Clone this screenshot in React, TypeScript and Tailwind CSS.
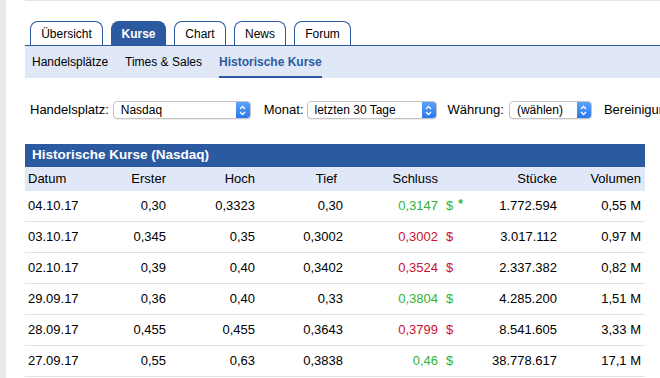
const TABS = [
  { label: "Übersicht", w: "w-[73px]", active: false },
  { label: "Kurse", w: "w-[55px]", active: true },
  { label: "Chart", w: "w-[52px]", active: false },
  { label: "News", w: "w-[52px]", active: false },
  { label: "Forum", w: "w-[57px]", active: false },
];

const ROWS = [
  { d: "04.10.17", e: "0,30", h: "0,3323", t: "0,30", s: "0,3147", up: true, star: true, st: "1.772.594", v: "0,55 M" },
  { d: "03.10.17", e: "0,345", h: "0,35", t: "0,3002", s: "0,3002", up: false, star: false, st: "3.017.112", v: "0,97 M" },
  { d: "02.10.17", e: "0,39", h: "0,40", t: "0,3402", s: "0,3524", up: false, star: false, st: "2.337.382", v: "0,82 M" },
  { d: "29.09.17", e: "0,36", h: "0,40", t: "0,33", s: "0,3804", up: true, star: false, st: "4.285.200", v: "1,51 M" },
  { d: "28.09.17", e: "0,455", h: "0,455", t: "0,3643", s: "0,3799", up: false, star: false, st: "8.541.605", v: "3,33 M" },
  { d: "27.09.17", e: "0,55", h: "0,63", t: "0,3838", s: "0,46", up: true, star: false, st: "38.778.617", v: "17,1 M" },
];

const GRID = "grid grid-cols-[80px_61px_89px_88px_95px_32px_87px_84px]";

function Select({ value, w }: { value: string; w: string }) {
  return (
    <div className={`${w} h-[18px] flex items-stretch rounded-[4px] border border-[#c4c4c4] bg-white shadow-[0_1px_1px_rgba(0,0,0,0.08)] overflow-hidden`}>
      <span className="flex-1 pl-[7px] text-[12px] leading-[16px] text-black truncate">{value}</span>
      <span className="w-[14px] flex items-center justify-center bg-gradient-to-b from-[#5aa2fa] to-[#2a78ee]">
        <svg width="7" height="11" viewBox="0 0 7 11" fill="none" stroke="white" strokeWidth="1.3">
          <path d="M1 4 L3.5 1.5 L6 4" />
          <path d="M1 7 L3.5 9.5 L6 7" />
        </svg>
      </span>
    </div>
  );
}

export default function App() {
  return (
    <div className="w-[660px] h-[378px] overflow-hidden bg-white flex font-['Liberation_Sans',Arial,sans-serif] text-black">
      <div className="w-[6px] shrink-0 bg-[#e8e8e8]" />
      <div className="ml-[19px] flex-1 min-w-0 border-t border-[#e6e6e6]">
        {/* Tabs */}
        <div className="mt-[20px] h-[24px] flex items-end gap-[8px] pl-[5px]">
          {TABS.map((t) => (
            <div
              key={t.label}
              className={`${t.w} h-[24px] rounded-t-[8px] border border-b-0 border-[#2c5aa0] flex items-center justify-center text-[12px] ${
                t.active ? "bg-[#2c5aa0] text-white font-bold" : "bg-white text-black"
              }`}
            >
              {t.label}
            </div>
          ))}
        </div>

        {/* Sub navigation */}
        <div className="h-[33px] border-t border-[#2c5aa0] bg-[#e0e8f8] flex items-stretch pl-[7px] gap-[17px] text-[12px]">
          <span className="flex items-center">Handelsplätze</span>
          <span className="flex items-center">Times &amp; Sales</span>
          <span className="flex items-center pt-[1px] font-bold text-[#2c5aa0] border-b-[2px] border-[#2c5aa0]">Historische Kurse</span>
        </div>

        {/* Filters */}
        <div className="mt-[23px] h-[18px] flex items-center pl-[5px] text-[13px] whitespace-nowrap">
          <span>Handelsplatz:</span>
          <div className="ml-[4px]"><Select value="Nasdaq" w="w-[138px]" /></div>
          <span className="ml-[13px]">Monat:</span>
          <div className="ml-[3px]"><Select value="letzten 30 Tage" w="w-[130px]" /></div>
          <span className="ml-[11px]">Währung:</span>
          <div className="ml-[5px]"><Select value="(wählen)" w="w-[83px]" /></div>
          <span className="ml-[12px]">Bereinigung</span>
        </div>

        {/* Table */}
        <div className="mt-[25px] w-[620px]">
          <div className="h-[23px] bg-[#2c5aa0] text-white font-bold text-[13.5px] flex items-center pl-[7px]">
            Historische Kurse (Nasdaq)
          </div>
          <div className={`${GRID} h-[24px] items-center bg-[#e0e8f8] text-[13px]`}>
            <span className="pl-[3px]">Datum</span>
            <span className="text-right">Erster</span>
            <span className="text-right">Hoch</span>
            <span className="text-right pr-[6px]">Tief</span>
            <span className="text-right">Schluss</span>
            <span />
            <span className="text-right">Stücke</span>
            <span className="text-right">Volumen</span>
          </div>
          {ROWS.map((r) => {
            const c = r.up ? "text-[#2fb52f]" : "text-[#cc1030]";
            return (
              <div key={r.d} className={`${GRID} h-[31px] items-center border-b border-[#e2e2e2] text-[13px]`}>
                <span className="pl-[3px]">{r.d}</span>
                <span className="text-right">{r.e}</span>
                <span className="text-right">{r.h}</span>
                <span className="text-right">{r.t}</span>
                <span className={`text-right ${c}`}>{r.s}</span>
                <span className={`pl-[8px] ${c}`}>
                  $
                  {r.star && <span className="ml-[5px] text-[12px] relative -top-[2px] font-bold">*</span>}
                </span>
                <span className="text-right">{r.st}</span>
                <span className="text-right">{r.v}</span>
              </div>
            );
          })}
        </div>
      </div>
    </div>
  );
}
